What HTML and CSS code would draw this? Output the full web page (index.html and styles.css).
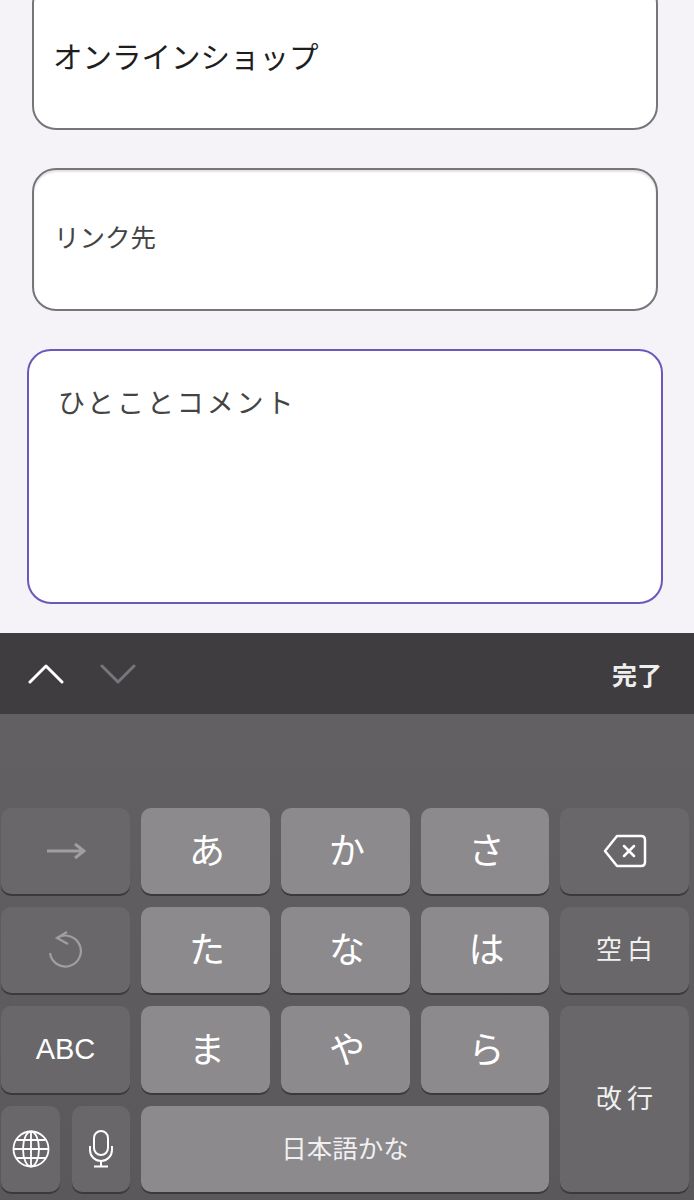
FILE: index.html
```html
<!DOCTYPE html>
<html lang="ja">
<head>
	<meta charset="UTF-8">
	<title>ひとことコメント</title>
	<link rel="stylesheet" href="styles.css">
</head>
<body>
	<div class="form">
		<div class="field fieldShop">オンラインショップ</div>
		<div class="field fieldLink">リンク先</div>
		<div class="field fieldComment">ひとことコメント</div>
	</div>

	<div class="toolbar">
		<svg class="chevron" viewBox="0 0 36 20"><path d="M2 18 L18 2 L34 18" stroke="#fff"/></svg>
		<svg class="chevron" viewBox="0 0 36 20"><path d="M2 2 L18 18 L34 2" stroke="#78767a"/></svg>
		<span class="doneButton">完了</span>
	</div>

	<div class="keyboard">
		<div class="key funcKey">
			<svg class="iconArrow" viewBox="0 0 40 18"><path d="M1 9 H38 M29 2 L38 9 L29 16"/></svg>
		</div>
		<div class="key">あ</div>
		<div class="key">か</div>
		<div class="key">さ</div>
		<div class="key funcKey">
			<svg class="iconDelete" viewBox="0 0 44 34"><path d="M14 2 H38 Q42 2 42 6 V28 Q42 32 38 32 H14 L2 17 Z"/><path d="M21 12 L31 22 M31 12 L21 22"/></svg>
		</div>

		<div class="key funcKey">
			<svg class="iconUndo" viewBox="0 0 33 38"><path d="M8 7 A15.5 15.5 0 1 1 1 22"/><path d="M18 1 L8 7 L19 13"/></svg>
		</div>
		<div class="key">た</div>
		<div class="key">な</div>
		<div class="key">は</div>
		<div class="key funcKey wideText">空白</div>

		<div class="key funcKey abcKey">ABC</div>
		<div class="key">ま</div>
		<div class="key">や</div>
		<div class="key">ら</div>
		<div class="key funcKey wideText returnKey">改行</div>

		<div class="splitKeys">
			<div class="key funcKey globeKey">
				<svg class="iconGlobe" viewBox="0 0 38 38">
					<circle cx="19" cy="19" r="17.5"/>
					<ellipse cx="19" cy="19" rx="8" ry="17.5"/>
					<path d="M19 1.5 V36.5 M1.5 19 H36.5 M4.5 10 H33.5 M4.5 28 H33.5"/>
				</svg>
			</div>
			<div class="key funcKey micKey">
				<svg class="iconMic" viewBox="0 0 24 38">
					<rect x="5" y="1" width="14" height="24" rx="7"/>
					<path d="M1 16 V20 A11 11 0 0 0 23 20 V16 M12 31 V36 M5 36.5 H19"/>
				</svg>
			</div>
		</div>
		<div class="key spaceKey">日本語かな</div>
	</div>
</body>
</html>
```

FILE: styles.css
```css
* {
	margin: 0;
	padding: 0;
	box-sizing: border-box;
}

html, body {
	height: 1200px;
	overflow: hidden;
}

body {
	background-color: #5c5a5d;
	font-family: "Noto Sans CJK JP", sans-serif;
}

.form {
	height: 633px;
	background-color: #f5f3f7;
	display: flex;
	flex-direction: column;
	padding-left: 32px;
	overflow: hidden;
}

.field {
	background-color: #fff;
	border: 2px solid #77757a;
	border-radius: 24px;
	width: 626px;
	display: flex;
	align-items: center;
}

.fieldShop {
	height: 150px;
	margin-top: -20px;
	padding: 0 0 0 19px;
	font-size: 29.5px;
	color: #1e1e1e;
}

.fieldLink {
	height: 143px;
	margin-top: 38px;
	padding: 0 0 8px 20px;
	font-size: 25.5px;
	color: #444;
	box-shadow: inset 0 2px 2px rgba(0, 0, 0, 0.12);
}

.fieldComment {
	height: 255px;
	width: 636px;
	margin: 38px 0 0 -5px;
	padding: 31px 0 0 29px;
	align-items: flex-start;
	font-size: 27px;
	line-height: 40px;
	letter-spacing: 2.9px;
	color: #444;
	border-color: #6a58bb;
}

.toolbar {
	height: 81px;
	background-color: #3f3d40;
	display: flex;
	align-items: center;
	padding: 0 32px 0 28px;
	gap: 36px;
}

.chevron {
	width: 36px;
	height: 20px;
	fill: none;
	stroke-width: 3;
	stroke-linecap: round;
	stroke-linejoin: round;
}

.doneButton {
	margin-left: auto;
	font-size: 25px;
	font-weight: 700;
	color: #eee;
}

.keyboard {
	height: 486px;
	background: linear-gradient(#626063, #5a585b);
	padding: 94px 0 0 1px;
	display: grid;
	grid-template-columns: 129px 129px 129px 128px 129px;
	grid-template-rows: 86px 86px 87px 86px;
	column-gap: 11px;
	row-gap: 13px;
}

.key {
	background-color: #8c8a8d;
	border-radius: 10px;
	box-shadow: 0 2px 0 #3b393c;
	color: #fff;
	font-size: 36px;
	padding: 0 0 6px 3px;
	display: flex;
	align-items: center;
	justify-content: center;
}

.funcKey {
	background-color: #69676a;
	padding: 0;
}

.wideText {
	font-size: 26px;
	letter-spacing: 5px;
	padding: 0 0 5px 5px;
	color: #f0f0f0;
}

.abcKey {
	font-family: "Liberation Sans", sans-serif;
	font-size: 29px;
}

.returnKey {
	grid-column: 5;
	grid-row: 3 / span 2;
}

.splitKeys {
	grid-column: 1;
	grid-row: 4;
	display: flex;
	gap: 12px;
}

.globeKey {
	width: 59px;
}

.micKey {
	width: 58px;
}

.spaceKey {
	grid-column: 2 / span 3;
	font-size: 25.5px;
	padding: 0 0 5px 0;
	color: #f0f0f0;
}

.iconArrow,
.iconDelete,
.iconUndo,
.iconGlobe,
.iconMic {
	fill: none;
	stroke: #fff;
	stroke-width: 2;
}

.iconArrow {
	width: 40px;
	height: 18px;
	stroke: #a09ea1;
	stroke-width: 3;
}

.iconDelete {
	width: 44px;
	height: 34px;
	stroke-width: 2.5;
	stroke-linejoin: round;
	stroke-linecap: round;
}

.iconUndo {
	width: 33px;
	height: 38px;
	stroke: #a09ea1;
	stroke-width: 2.2;
}

.iconGlobe {
	width: 38px;
	height: 38px;
	stroke-width: 1.8;
}

.iconMic {
	width: 24px;
	height: 38px;
}
```
